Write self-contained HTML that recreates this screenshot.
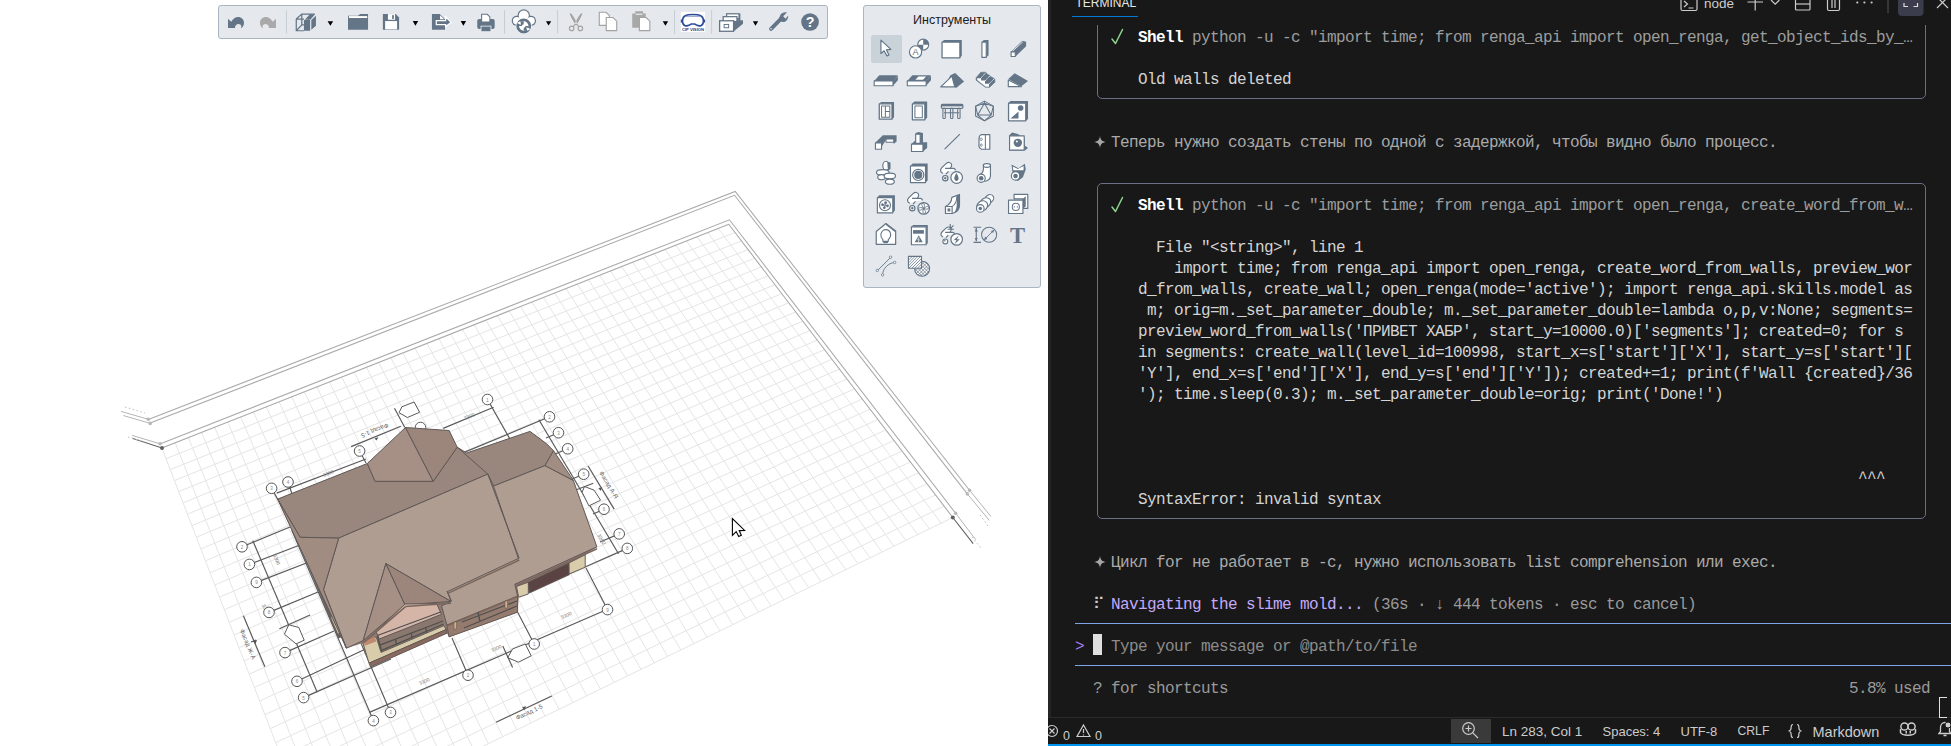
<!DOCTYPE html>
<html><head><meta charset="utf-8">
<style>
html,body{margin:0;padding:0;width:1951px;height:746px;overflow:hidden;background:#fff;position:relative;}
*{box-sizing:border-box;}
.abs{position:absolute;}
#vp{position:absolute;left:0;top:0;width:1048px;height:746px;background:#fff;overflow:hidden;}
#term{position:absolute;left:1048px;top:0;width:903px;height:746px;background:#181818;overflow:hidden;}
.t{position:absolute;font-family:"Liberation Mono",monospace;font-size:16px;letter-spacing:-0.6px;line-height:21px;height:21px;white-space:pre;color:#cccccc;}
.sans{font-family:"Liberation Sans",sans-serif;}
.box{position:absolute;border:1.2px solid #6c6e86;border-radius:5px;}
</style></head>
<body>
<div id="vp">
<!--VIEWPORT-->
<svg width="1048" height="746" viewBox="0 0 1048 746" style="position:absolute;left:0;top:0">
<path d="M728.5 224.1L161.9 448.0M734.9 232.5L166.0 458.7M741.4 241.0L170.2 469.6M748.0 249.5L174.5 480.5M754.6 258.2L178.7 491.6M761.2 266.9L183.1 502.8M768.0 275.8L187.4 514.2M774.8 284.7L191.9 525.6M781.7 293.7L196.4 537.2M788.6 302.8L200.9 548.9M795.7 311.9L205.5 560.8M802.8 321.2L210.1 572.8M809.9 330.6L214.8 585.0M817.2 340.1L219.5 597.2M824.5 349.6L224.3 609.7M831.9 359.3L229.2 622.3M839.3 369.1L234.1 635.0M846.9 379.0L239.1 647.9M854.5 388.9L244.1 660.9M862.2 399.0L249.2 674.1M870.0 409.2L254.4 687.5M877.9 419.5L259.6 701.0M885.9 429.9L264.9 714.7M893.9 440.5L270.3 728.6M902.0 451.1L275.7 742.6M910.3 461.9L281.2 756.8M918.6 472.7L286.7 771.2M927.0 483.7L292.4 785.8M935.5 494.9L298.1 800.6M944.1 506.1L303.8 815.5M952.8 517.5L309.7 830.7M728.5 224.1L952.8 517.5M718.0 228.2L941.2 523.2M707.5 232.4L929.5 528.9M696.9 236.6L917.7 534.6M686.3 240.8L905.9 540.4M675.6 245.0L894.0 546.2M664.9 249.2L882.0 552.0M654.1 253.5L870.0 557.8M643.2 257.8L857.9 563.7M632.4 262.1L845.7 569.7M621.4 266.4L833.4 575.6M610.4 270.8L821.1 581.6M599.4 275.1L808.7 587.7M588.3 279.5L796.3 593.7M577.1 283.9L783.7 599.8M565.9 288.4L771.1 606.0M554.6 292.8L758.5 612.1M543.3 297.3L745.7 618.4M531.9 301.8L732.9 624.6M520.5 306.3L720.0 630.9M509.0 310.9L707.0 637.2M497.4 315.4L694.0 643.6M485.8 320.0L680.8 650.0M474.1 324.6L667.6 656.4M462.4 329.3L654.3 662.9M450.6 333.9L641.0 669.4M438.8 338.6L627.5 675.9M426.8 343.3L614.0 682.5M414.9 348.0L600.4 689.1M402.8 352.8L586.7 695.8M390.7 357.6L572.9 702.5M378.6 362.4L559.0 709.3M366.4 367.2L545.1 716.1M354.1 372.1L531.0 722.9M341.7 376.9L516.9 729.8M329.3 381.8L502.7 736.7M316.9 386.8L488.4 743.7M304.3 391.7L474.0 750.7M291.7 396.7L459.6 757.7M279.0 401.7L445.0 764.8M266.3 406.7L430.3 771.9M253.5 411.8L415.6 779.1M240.6 416.9L400.8 786.4M227.7 422.0L385.8 793.6M214.7 427.2L370.8 800.9M201.6 432.3L355.7 808.3M188.4 437.5L340.4 815.7M175.2 442.7L325.1 823.2M161.9 448.0L309.7 830.7" stroke="#e5e5e5" stroke-width="1" fill="none"/>
<path d="M148.3 419.4 L735.2 191.5 L969.5 490.2" stroke="#aaaaaa" stroke-width="1.05" fill="none" stroke-linejoin="miter"/>
<path d="M150.2 423.1 L734.5 195.3 L967.3 493.9" stroke="#aaaaaa" stroke-width="1.05" fill="none" stroke-linejoin="miter"/>
<path d="M159.9 443.9 L729.4 219.8 L955.6 513.2" stroke="#aaaaaa" stroke-width="1.05" fill="none" stroke-linejoin="miter"/>
<path d="M161.9 448.1 L728.8 224.3 L952.8 517.5" stroke="#aaaaaa" stroke-width="1.05" fill="none" stroke-linejoin="miter"/>
<g id="annot" stroke="#5a5a5a" stroke-width="1.15" fill="none">
 <!-- boundary ends -->
 <g stroke="#b5b5b5" stroke-width="1"><path d="M148.3 419.3 L121 411.4 M150.2 423.4 L123.3 415.5 M160.1 443.8 L132.1 435.4 M969.5 490.2 L990.9 516.4 M967.3 493.9 L989.3 520.4 M955.6 513.2 L975.7 539.7"/></g>
 <path d="M162 448 L132.1 438.3 M952.8 517.5 L973.2 543.7" stroke="#666"/>
 <g stroke="#bbb" stroke-width="1" stroke-dasharray="1.5 2.5"><path d="M125 407 L145 413 M128 437 L148 443 M980 515 L988 526 M972 537 L981 548"/></g>
 <!-- left chain -->
 <path d="M252.8 540.7 L317.2 692.2"/>
 <path d="M242 546.8 L290 527 M249.4 564.4 L300 545 M256.4 582.4 L309 562 M269 612.4 L318 592 M285 652.6 L334 631 M297 681.3 L372 646 M303.6 697.6 L391 659"/>
 <path d="M243.4 615.8 L264.9 666.8 M251 642 L256 640"/>
 <!-- bottom chain -->
 <path d="M373.4 720.6 L291.7 530 M390.5 712.4 L352 622 M468 675.2 L452 638 M534.2 644 L517 611 M607.5 609.6 L586 568"/>
 <path d="M369.4 712.4 L607 609.5"/>
 <path d="M496 722.3 L551.8 695.9"/>
 <!-- right chain -->
 <path d="M538.9 419.8 L618.5 553.7"/>
 <path d="M549.5 416.8 L464.1 452.4 M558.5 432.7 L546 438 M567.7 448.8 L553 455 M583.7 474.2 L572 479 M604 509.2 L593 514 M619.2 533.9 L600 542 M627.3 548.4 L585 567"/>
 <path d="M443.2 428.4 L493.6 407.3 M487.5 399.5 L510 439.1"/>
 <path d="M588.1 466 L614.2 509.1"/>
 <!-- top chain -->
 <path d="M276.7 493.1 L366 459 M271.6 488.3 L277.6 499.1 M288 482 L292 494 M359.6 451 L366 463"/>
 <path d="M351.1 446.6 L400.8 426.3 M394.5 408.3 L404.8 427.4"/>
 <!-- tags -->
 <g fill="#fff" stroke-width="1">
  <path d="M399 412.7 L401.9 406.8 L414.1 402 L419.6 412.3 L407.4 417.5 Z"/>
  <path d="M584.5 486.5 L594.1 490.2 L600.6 500.2 L588.9 505.9 L582.1 492.2 Z"/>
  <path d="M288.8 624.8 L298.8 627.5 L304.2 640.2 L296.1 643.9 L284.4 634.2 Z"/>
  <path d="M507.7 657.7 L512.6 648.9 L525.3 644 L531.2 655.8 L518.5 662.2 Z"/>
 </g>
 <path d="M576.4 489.8 L593.3 483.3 M279.4 628.8 L310 615.1 M502.8 646 L512.6 667.5"/>
 <g fill="#555" stroke="none"><path d="M374.5 438.5 L378.5 437 L376.5 440.5 Z M598.5 488 L602 487.5 L600.5 491 Z M522 707.5 L526 706 L524.5 710 Z M253 641 L257 640 L255.5 644 Z"/></g>
</g>
<!-- house base/walls -->
<g stroke="#5e5654" stroke-width="0.9" stroke-linejoin="round">
 <path d="M277.6 499.1 L596.9 546.8 L585.2 554.7 L585.2 567.2 L518.7 597.2 L517.6 612.2 L449 636.9 L447 633.2 L370.7 666.5 L362.2 643.3 L346.4 648.2 Z" fill="#8e7b72" stroke="none"/>
 <path d="M376.2 633.1 L440.1 609 L443.7 624.6 L381 652.4 Z" fill="#8a776e" stroke="none"/>
 <path d="M300 546 L305.5 545 L343 636 L338.5 638 Z" fill="#6a6361"/><path d="M331 617.6 L334 616.5 L341 632 L338 633.5 Z" fill="#d9ccaa" stroke="none"/>
 <path d="M362.9 642.7 L376.2 637 L381 652.4 L443.7 625.8 L446.2 629.5 L369 663.2 Z" fill="#d9ccaa"/><path d="M363.5 641.5 L375 636.7 L376.2 641.5 L364.7 645.7 Z" fill="#c08a70" stroke="none"/>
 <path d="M369 663.2 L446.2 629.5 L447 633.2 L370.7 666.9 Z" fill="#8a6a5e"/>
 <path d="M446.9 625.1 L517.6 596.1 L517.6 612.2 L449 636.9 Z" fill="#957a6e"/>
 <path d="M516.5 586.5 L528.3 582.2 L528.3 594 L518.7 597.2 Z" fill="#d9ccaa"/>
 <path d="M528.3 582.2 L569.1 562.9 L569.1 574.7 L529.4 592.9 Z" fill="#5b4343"/>
 <path d="M569.1 562.9 L585.2 554.7 L585.2 567.2 L569.1 574 Z" fill="#d9ccaa"/>
</g>
<circle cx="420.5" cy="427.5" r="5.3" fill="#fff" stroke="#555" stroke-width="1"/>
<!-- roof -->
<g stroke="#5f5856" stroke-width="1" stroke-linejoin="round">
 <!-- back slope dark -->
 <path d="M277.6 499.1 L367.3 463.5 L375.1 481.3 L433.2 481.3 L457.2 447.2 L466.7 453 L530 431.4 L546.4 443.6 L553.5 450.7 L545 465.6 L493.5 486.1 L487.8 474.1 L338.7 538.1 L300.1 537.3 Z" fill="#99877d"/>
 <!-- front light -->
 <path d="M338.7 538.1 L487.8 474.1 L493.5 486.1 L545 465.6 L573.3 480.4 L596.9 546.8 L514.8 584.3 L517.6 596.1 L446.9 625.1 L441.5 605.8 L451.1 601.5 L385.9 563.6 L363.2 640.6 L346.4 648.2 L323.5 589.6 Z" fill="#b09d92"/>
 <path d="M277.6 499.1 L300.1 537.3 L338.7 538.1 L323.5 589.6 L346.4 648.2 Z" fill="#a18c82"/>
 <path d="M545 465.6 L553.5 450.7 L573.3 480.4 Z" fill="#a28d83"/>
 <!-- dormer -->
 <path d="M367.3 463.5 L405.5 427.5 L433.2 481.3 L375.1 481.3 Z" fill="#a69086"/>
 <path d="M405.5 427.5 L449.1 430.5 L457.2 447.2 L433.2 481.3 Z" fill="#9c867b"/>
 <!-- internal edges -->
 <path d="M487.8 474.1 L519.1 558.1 L447.4 591.6 L451.4 601 M493.5 486.1 L518.6 559 M457.2 447.2 L487.8 474.1" fill="none"/>
 <!-- front gable -->
 <path d="M385.9 563.6 L405 604.8 L363.2 640.6 Z" fill="#a69086"/>
 <path d="M385.9 563.6 L450.9 601.4 L405 604.8 Z" fill="#9c867b"/>
 <path d="M376.1 631.5 L405 604 L436.6 603.6 L441.5 614.3 L379.3 639 Z" fill="#d5b5a8"/>
 <path d="M451.1 601.5 L446.9 590.8" fill="none"/>
</g>
<g stroke="#7a665c" stroke-width="1.6" fill="none" stroke-linecap="butt">
 <path d="M519.3 560 L447.8 593.4 M597 548.8 L515.2 586.2 M517.6 596.5 L447.5 625.5 M405.5 606.5 L451 603.2 M364 642.3 L405.5 606.6"/>
</g>
<g stroke="#4f4f4f" stroke-width="1.3" fill="none">
 <path d="M377.4 635.5 L440.7 612 M379.8 645.1 L443.1 621 M381 650.6 L443.7 624 M377.5 636 L381.5 651 M395.5 639 L396.5 645 M411.2 632.5 L412.2 638.5 M425.6 627 L426.6 633"/>
 <path d="M462 622 L517 601 M464 628 L517 606 M478 612 L480 622"/>
</g>
<g fill="#d2b08f" stroke="#6d5a50" stroke-width="0.6"><rect x="454" y="622" width="2.6" height="7"/><rect x="505" y="601" width="2.6" height="7"/></g>
<g font-family="Liberation Sans" fill="#666" font-size="6.2">
 <text transform="translate(374 428.5) rotate(158)" text-anchor="middle">Фасад 1-5</text>
 <text transform="translate(607 486) rotate(59)" text-anchor="middle">Фасад А-Я</text>
 <text transform="translate(246 645) rotate(67)" text-anchor="middle">Фасад Ж-А</text>
 <text transform="translate(530 714) rotate(-25)" text-anchor="middle">Фасад 1-5</text>
</g>
<g font-family="Liberation Sans" fill="#777" font-size="5">
 <text transform="translate(329 475) rotate(-22)" text-anchor="middle">3300</text>
 <text transform="translate(470 418) rotate(-22)" text-anchor="middle">3300</text>
 <text transform="translate(567 617) rotate(-25)" text-anchor="middle">3300</text>
 <text transform="translate(425 683) rotate(-25)" text-anchor="middle">3300</text>
 <text transform="translate(497 650) rotate(-25)" text-anchor="middle">3300</text>
 <text transform="translate(264 610) rotate(67)" text-anchor="middle">3300</text>
 <text transform="translate(275 560) rotate(67)" text-anchor="middle">3300</text>
 <text transform="translate(600 540) rotate(59)" text-anchor="middle">3300</text>
</g>
<!-- circles -->
<g stroke="#555" stroke-width="1" fill="#fff">
 <circle cx="487.5" cy="399.5" r="5.3"/><circle cx="549.5" cy="416.8" r="5.3"/><circle cx="558.5" cy="432.7" r="5.3"/>
 <circle cx="567.7" cy="448.8" r="5.3"/><circle cx="583.7" cy="474.2" r="5.3"/><circle cx="604" cy="509.2" r="5.3"/>
 <circle cx="619.2" cy="533.9" r="5.3"/><circle cx="627.3" cy="548.4" r="5.3"/><circle cx="607.5" cy="609.6" r="5.3"/>
 <circle cx="534.2" cy="644" r="5.3"/><circle cx="468" cy="675.2" r="5.3"/><circle cx="390.5" cy="712.4" r="5.3"/>
 <circle cx="373.4" cy="720.6" r="5.3"/><circle cx="303.6" cy="697.6" r="5.3"/><circle cx="297" cy="681.3" r="5.3"/>
 <circle cx="285" cy="652.6" r="5.3"/><circle cx="269" cy="612.4" r="5.3"/><circle cx="256.4" cy="582.4" r="5.3"/>
 <circle cx="249.4" cy="564.4" r="5.3"/><circle cx="242" cy="546.8" r="5.3"/><circle cx="271.6" cy="488.3" r="5.3"/>
 <circle cx="288" cy="482" r="5.3"/><circle cx="359.6" cy="451" r="5.3"/>
</g>
<g font-family="Liberation Sans" fill="#888" font-size="4.5" text-anchor="middle"><text x="487.5" y="401.5">1</text><text x="549.5" y="418.8">2</text><text x="558.5" y="434.7">3</text><text x="567.7" y="450.8">4</text><text x="583.7" y="476.2">5</text><text x="604.0" y="511.2">6</text><text x="619.2" y="535.9">7</text><text x="627.3" y="550.4">8</text><text x="607.5" y="611.6">9</text><text x="534.2" y="646.0">1</text><text x="468.0" y="677.2">2</text><text x="390.5" y="714.4">3</text><text x="373.4" y="722.6">4</text><text x="303.6" y="699.6">5</text><text x="297.0" y="683.3">6</text><text x="285.0" y="654.6">7</text><text x="269.0" y="614.4">8</text><text x="256.4" y="584.4">9</text><text x="249.4" y="566.4">1</text><text x="242.0" y="548.8">2</text><text x="271.6" y="490.3">3</text><text x="288.0" y="484.0">4</text><text x="359.6" y="453.0">5</text></g>


<path d="M732.4 518.5 L732.4 535.4 L736.2 531.6 L738.7 536.5 L741.3 535.2 L739.2 530.6 L744.6 530.4 Z" fill="#fff" stroke="#000" stroke-width="1.1" stroke-linejoin="miter"/>
<g><circle cx="148.3" cy="419.3" r="1.8" fill="#b8b8b8"/><circle cx="150.2" cy="423.4" r="1.8" fill="#b8b8b8"/><circle cx="160.1" cy="443.8" r="1.8" fill="#b8b8b8"/><circle cx="162" cy="448" r="2" fill="#606060"/><circle cx="969.5" cy="490.2" r="1.8" fill="#b8b8b8"/><circle cx="967.3" cy="493.9" r="1.8" fill="#b8b8b8"/><circle cx="955.6" cy="513.2" r="1.8" fill="#b8b8b8"/><circle cx="952.8" cy="517.5" r="2" fill="#606060"/></g>

</svg>
<!--/VIEWPORT-->
<!--TOOLBAR-->
<div class="abs" style="left:218px;top:5px;width:610px;height:34px;background:#e5e9ed;border:1px solid #a9b5c1;border-radius:3px;"></div>
<svg class="abs" style="left:0;top:0" width="860" height="45" viewBox="0 0 860 45">
 <g transform="translate(220 8) scale(0.0615)">
  <path id="undo" d="M130 175 L182 224 C212 180 250 148 295 148 C350 148 390 190 390 240 C390 280 375 305 350 325 L342 325 C350 305 350 285 335 272 C315 255 280 255 262 278 L245 300 L245 325 L130 325 Z" fill="#637587"/>
  <path d="M130 175 L182 224 C212 180 250 148 295 148 C350 148 390 190 390 240 C390 280 375 305 350 325 L342 325 C350 305 350 285 335 272 C315 255 280 255 262 278 L245 300 L245 325 L130 325 Z" fill="#a9a9a9" transform="translate(1040 0) scale(-1 1)"/>
  <path d="M1080 35 L1080 415" stroke="#c5ccd4" stroke-width="16"/>
  <g fill="none" stroke="#637587" stroke-width="20">
   <path d="M1240 180 L1240 370 L1365 370 M1240 180 L1330 100 L1540 100 M1240 180 L1365 180 M1330 100 L1330 275 L1365 275 M1240 370 L1330 275"/>
  </g>
  <path d="M1365 195 L1465 195 L1465 370 L1365 370 Z M1380 190 L1460 100 L1545 100 L1468 190 Z M1485 195 L1560 125 L1560 290 L1485 355 Z" fill="#637587"/>
  <path d="M1750 215 L1840 215 L1795 290 Z" fill="#000"/>
 </g>
 <g transform="translate(340 8) scale(0.08714)">
  <path d="M92 90 L205 90 L232 70 L322 70 L322 250 L92 250 Z" fill="#637587"/>
  <rect x="102" y="93" width="210" height="22" fill="#fff"/>
  <path d="M492 70 L640 70 L678 108 L678 250 L492 250 Z" fill="#637587"/>
  <rect x="518" y="150" width="137" height="95" fill="#fff"/>
  <rect x="550" y="70" width="82" height="65" fill="#fff"/>
  <rect x="598" y="82" width="20" height="43" fill="#637587"/>
  <path d="M835 150 L897 150 L866 205 Z" fill="#000"/>
  <path d="M1055 70 L1145 70 L1205 130 L1205 250 L1055 250 Z" fill="#637587"/>
  <path d="M1148 82 L1195 130 L1148 130 Z" fill="#fff"/>
  <path d="M1105 145 L1212 145 L1212 100 L1275 165 L1212 212 L1212 190 L1105 190 Z" fill="#637587" stroke="#fff" stroke-width="14"/>
  <path d="M1385 150 L1447 150 L1416 205 Z" fill="#000"/>
  <rect x="1575" y="125" width="200" height="115" rx="22" fill="#637587"/>
  <path d="M1625 72 L1690 72 L1720 102 L1720 160 L1625 160 Z" fill="#fff" stroke="#637587" stroke-width="12"/>
  <rect x="1618" y="208" width="114" height="64" fill="#637587" stroke="#e5e9ed" stroke-width="10"/>
  <path d="M1888 25 L1888 295" stroke="#c5ccd4" stroke-width="11"/>
 </g>
 <g transform="translate(505 6) scale(0.08714)">
  <g fill="#637587"><circle cx="215" cy="110" r="72"/><circle cx="135" cy="170" r="58"/><circle cx="298" cy="170" r="58"/></g>
  <g fill="#fff"><circle cx="215" cy="110" r="58"/><circle cx="135" cy="170" r="44"/><circle cx="298" cy="170" r="44"/><rect x="135" y="150" width="165" height="80"/></g>
  <circle cx="215" cy="228" r="92" fill="#fff"/>
  <circle cx="215" cy="230" r="70" fill="none" stroke="#637587" stroke-width="32"/>
  <path d="M215 175 A55 55 0 0 0 160 230 L195 230 A20 20 0 0 1 215 210 Z M215 285 A55 55 0 0 0 270 230 L235 230 A20 20 0 0 1 215 250 Z" fill="#637587"/>
  <path d="M135 195 L175 175 L185 215 Z M295 265 L255 285 L245 245 Z" fill="#fff"/>
  <path d="M470 175 L530 175 L500 225 Z" fill="#000"/>
  <path d="M603 45 L603 315" stroke="#c5ccd4" stroke-width="11"/>
  <g fill="#a3a3a3"><path d="M742 80 C760 85 775 100 790 130 L835 210 L812 225 L770 150 C755 120 745 100 742 80 Z M888 80 C870 85 855 100 840 130 L795 210 L818 225 L860 150 C875 120 885 100 888 80 Z"/></g>
  <g fill="none" stroke="#a3a3a3" stroke-width="13"><circle cx="765" cy="257" r="26"/><circle cx="865" cy="257" r="26"/><path d="M815 205 L780 236 M815 205 L850 236"/></g>
  <g fill="#fff" stroke="#a3a3a3" stroke-width="13">
   <path d="M1082 72 L1160 72 L1198 110 L1198 223 L1082 223 Z"/>
   <path d="M1162 132 L1240 132 L1282 174 L1282 283 L1162 283 Z"/>
  </g>
  <path d="M1460 85 L1495 85 L1495 60 L1585 60 L1585 85 L1615 85 L1615 250 L1460 250 Z" fill="#a8a8a8"/>
  <rect x="1500" y="88" width="78" height="14" fill="#e5e9ed"/>
  <path d="M1542 132 L1620 132 L1662 174 L1662 283 L1542 283 Z" fill="#fff" stroke="#a3a3a3" stroke-width="13"/>
  <path d="M1810 175 L1872 175 L1841 228 Z" fill="#000"/>
 </g>
 <g transform="translate(670 6) scale(0.08203)">
  <path d="M55 50 L55 340" stroke="#c5ccd4" stroke-width="12"/>
  <rect x="133" y="72" width="295" height="243" fill="#fff"/>
  <path d="M152 182 C152 118 198 104 280 104 C362 104 408 118 408 182 C408 242 362 250 330 236 L302 220 L258 220 L230 236 C198 250 152 242 152 182 Z" fill="none" stroke="#2d4b98" stroke-width="20"/>
  <path d="M195 125 L365 125" stroke="#7f93c4" stroke-width="12"/>
  <path d="M140 165 L140 200 M420 165 L420 200" stroke="#2d4b98" stroke-width="16"/>
  <text x="145" y="304" font-family="Liberation Sans" font-weight="bold" font-size="42" fill="#22397a" textLength="270" lengthAdjust="spacingAndGlyphs">CIP VISION</text>
  <path d="M507 50 L507 340" stroke="#c5ccd4" stroke-width="12"/>
  <g fill="#637587">
   <path d="M835 95 L858 90 L858 190 L835 210 Z"/>
   <path d="M810 130 L835 125 L835 225 L810 245 Z"/>
   <path d="M775 180 L890 175 L890 215 L775 310 Z"/>
  </g>
  <rect x="690" y="95" width="152" height="60" fill="#fff" stroke="#637587" stroke-width="15"/>
  <rect x="648" y="130" width="168" height="60" fill="#fff" stroke="#637587" stroke-width="15"/>
  <rect x="605" y="180" width="170" height="128" fill="#fff" stroke="#637587" stroke-width="16"/>
  <rect x="660" y="225" width="55" height="40" fill="none" stroke="#637587" stroke-width="12"/>
  <path d="M1010 185 L1075 185 L1042 240 Z" fill="#000"/>
  <path d="M1232 278 L1355 155" stroke="#637587" stroke-width="48" stroke-linecap="round"/>
  <circle cx="1232" cy="278" r="10" fill="#e5e9ed"/>
  <path d="M1345 110 C1360 80 1400 70 1425 78 L1380 125 L1410 155 L1440 115 C1445 150 1425 185 1390 195 C1360 200 1330 180 1330 150 Z" fill="#637587"/>
  <circle cx="1707" cy="195" r="108" fill="#637587"/>
  <text x="1707" y="262" font-family="Liberation Sans" font-weight="bold" font-size="175" fill="#fff" text-anchor="middle">?</text>
 </g>
</svg>

<!--/TOOLBAR-->
<!--PANEL-->
<div class="abs" style="left:863px;top:5px;width:178px;height:283px;background:#e5e9ed;border:1px solid #a9b5c1;border-radius:3px;"></div>
<div class="abs sans" style="left:863px;top:13px;width:178px;text-align:center;font-size:12.5px;color:#1b1b1b;">Инструменты</div>
<div class="abs" style="left:871px;top:34.5px;width:30.5px;height:28.5px;background:#c9d1d9;border-radius:2px;"></div>
<svg class="abs" style="left:0;top:0" width="1048" height="295" viewBox="0 0 1048 295">
 <g transform="translate(865 30) scale(0.12737)" stroke-linejoin="round">
  <!-- row1 -->
  <path d="M125 80 L125 185 L150 163 L172 203 L188 196 L168 156 L203 152 Z" fill="#fff" stroke="#637587" stroke-width="9"/>
  <circle cx="457" cy="115" r="43" fill="#fff" stroke="#637587" stroke-width="9"/>
  <path d="M457 115 L457 72 A43 43 0 0 1 500 115 Z M457 115 L457 158 A43 43 0 0 1 414 115 Z" fill="#637587"/>
  <circle cx="397" cy="172" r="48" fill="#fff" stroke="#637587" stroke-width="9"/>
  <text x="397" y="197" font-family="Liberation Sans" font-size="72" fill="#637587" text-anchor="middle">A</text>
  <path d="M605 95 L620 78 L760 78 L745 95 Z M745 95 L760 78 L760 203 L745 218 Z" fill="#637587"/>
  <rect x="605" y="95" width="140" height="123" fill="#fff" stroke="#637587" stroke-width="10"/>
  <path d="M918 95 L932 78 L970 78 L952 95 Z M952 95 L970 78 L970 198 L952 215 Z" fill="#637587"/>
  <rect x="918" y="95" width="34" height="120" fill="#fff" stroke="#637587" stroke-width="9"/>
  <path d="M1145 172 L1235 85 L1265 92 L1180 172 Z M1180 172 L1265 92 L1265 128 L1180 210 Z" fill="#637587"/>
  <path d="M1160 165 L1240 92" stroke="#fff" stroke-width="6"/>
  <rect x="1147" y="172" width="33" height="36" fill="#fff" stroke="#637587" stroke-width="9"/>
  <!-- row2 -->
  <path d="M72 400 L112 355 L258 355 L220 400 Z M220 400 L258 360 L258 395 L220 438 Z" fill="#637587"/>
  <rect x="72" y="400" width="148" height="38" fill="#fff" stroke="#637587" stroke-width="9"/>
  <path d="M332 400 L372 355 L518 355 L480 400 Z M480 400 L518 360 L518 395 L480 438 Z" fill="#637587"/>
  <path d="M395 390 L420 365 L480 365 L455 390 Z" fill="#fff"/>
  <rect x="332" y="400" width="148" height="38" fill="#fff" stroke="#637587" stroke-width="9"/>
  <path d="M670 355 L708 338 L778 405 L715 455 L650 398 Z" fill="#637587"/>
  <path d="M595 447 L682 362 L705 447 Z" fill="#fff" stroke="#637587" stroke-width="9"/>
  <path d="M1125 385 L1175 340 L1280 400 L1228 442 Z" fill="#637587"/>
  <path d="M1125 392 L1125 445 L1228 445 Z" fill="#fff" stroke="#637587" stroke-width="9"/>
  <!-- row3 -->
  <path d="M110 580 L127 565 L228 565 L212 580 Z M212 580 L228 565 L228 685 L212 700 Z" fill="#637587"/>
  <rect x="112" y="580" width="100" height="120" fill="#fff" stroke="#637587" stroke-width="10"/>
  <path d="M130 597 L195 597 L195 685 L130 685 Z M160 597 L160 685 M160 640 L195 640" fill="none" stroke="#637587" stroke-width="8"/>
  <path d="M370 580 L387 562 L488 562 L470 580 Z M470 580 L488 562 L488 688 L470 705 Z" fill="#637587"/>
  <rect x="372" y="580" width="98" height="125" fill="#fff" stroke="#637587" stroke-width="10"/>
  <rect x="392" y="597" width="58" height="92" fill="none" stroke="#637587" stroke-width="8"/>
  <rect x="600" y="585" width="168" height="30" rx="8" fill="#fff" stroke="#637587" stroke-width="10"/>
  <path d="M600 585 L768 585 L768 600 L600 600 Z" fill="#637587"/>
  <g stroke="#637587" stroke-width="9" fill="#fff"><rect x="612" y="615" width="18" height="80" rx="6"/><rect x="672" y="615" width="18" height="80" rx="6"/><rect x="728" y="615" width="18" height="80" rx="6"/></g>
  <path d="M620 650 L740 650" stroke="#637587" stroke-width="8"/>
  <g fill="none" stroke="#637587" stroke-width="8">
   <path d="M938 558 L1008 598 L1008 675 L938 713 L868 675 L868 598 Z"/>
   <path d="M938 575 L990 668 L885 668 Z M938 558 L938 575 M868 598 L885 668 M1008 598 L990 668 M938 713 L885 668 M938 713 L990 668 M868 598 L938 575 L1008 598"/>
  </g>
  <path d="M1125 575 L1142 558 L1280 558 L1262 575 Z M1262 575 L1280 558 L1280 698 L1262 715 Z" fill="#637587"/>
  <rect x="1127" y="575" width="135" height="138" fill="#fff" stroke="#637587" stroke-width="10"/>
  <circle cx="1222" cy="612" r="22" fill="#637587"/>
  <path d="M1142 695 L1205 640 L1205 695 Z" fill="#637587"/>
 </g>
 <g transform="translate(865 125) scale(0.12737)" stroke-linejoin="round">
  <!-- row4 -->
  <path d="M80 140 L140 80 L248 80 L248 130 L225 150 L225 110 L170 110 L130 170 L130 190 Z" fill="#637587"/>
  <rect x="82" y="140" width="48" height="50" fill="#fff" stroke="#637587" stroke-width="9"/>
  <rect x="165" y="110" width="60" height="25" fill="#fff" stroke="#637587" stroke-width="8"/>
  <path d="M365 150 L398 118 L398 62 L420 55 L455 62 L455 135 L488 135 L488 180 L455 208 Z" fill="#637587"/>
  <rect x="398" y="72" width="35" height="72" fill="#fff" stroke="#637587" stroke-width="9"/>
  <rect x="365" y="150" width="90" height="58" fill="#fff" stroke="#637587" stroke-width="9"/>
  <path d="M625 190 L745 72" stroke="#637587" stroke-width="9"/>
  <path d="M915 75 L980 75 L980 190 L915 190 C895 180 892 165 895 150 L895 110 C895 92 900 80 915 75 Z" fill="#fff" stroke="#637587" stroke-width="9"/>
  <path d="M945 75 L945 190" stroke="#637587" stroke-width="8"/>
  <circle cx="912" cy="112" r="9" fill="#fff" stroke="#637587" stroke-width="6"/><circle cx="912" cy="158" r="9" fill="#fff" stroke="#637587" stroke-width="6"/>
  <path d="M1132 80 L1155 58 L1200 70 L1255 105 L1255 160 L1280 180 L1255 200 L1132 200 Z" fill="#637587"/>
  <rect x="1135" y="85" width="115" height="112" fill="#fff" stroke="#637587" stroke-width="9"/>
  <circle cx="1200" cy="140" r="33" fill="#637587"/><circle cx="1192" cy="130" r="8" fill="#fff"/>
  <!-- row5 -->
  <g fill="#fff" stroke="#637587" stroke-width="9">
   <ellipse cx="165" cy="320" rx="25" ry="35"/>
   <ellipse cx="140" cy="372" rx="50" ry="22"/><ellipse cx="130" cy="410" rx="30" ry="20"/>
   <ellipse cx="195" cy="400" rx="45" ry="22"/><ellipse cx="195" cy="445" rx="35" ry="20"/>
  </g>
  <path d="M175 288 L200 295 L200 345 L180 360 Z" fill="#637587"/>
  <path d="M355 322 L375 302 L492 302 L475 322 Z M475 322 L492 302 L492 435 L475 452 Z" fill="#637587"/>
  <rect x="357" y="322" width="118" height="130" fill="#fff" stroke="#637587" stroke-width="9"/>
  <circle cx="418" cy="392" r="44" fill="#fff" stroke="#637587" stroke-width="9"/><circle cx="418" cy="392" r="32" fill="#637587"/>
  <path d="M930 310 L985 310 L985 400 C985 430 950 445 930 440 L900 440 L900 395 C915 385 930 370 930 340 Z" fill="#fff" stroke="#637587" stroke-width="9"/>
  <ellipse cx="957" cy="318" rx="28" ry="15" fill="#fff" stroke="#637587" stroke-width="9"/>
  <circle cx="912" cy="418" r="32" fill="#fff" stroke="#637587" stroke-width="9"/><circle cx="912" cy="418" r="18" fill="#637587"/>
  <path d="M1150 310 L1205 340 L1255 305 L1262 350 L1240 410 L1200 440 L1165 420 Z" fill="#637587"/>
  <path d="M1160 325 L1200 345 L1245 322 L1245 355 L1165 355 Z" fill="#fff"/>
  <circle cx="1182" cy="400" r="33" fill="#fff" stroke="#637587" stroke-width="9"/><circle cx="1182" cy="400" r="18" fill="#637587"/>
  <!-- row6 -->
  <path d="M95 570 L112 552 L235 552 L218 570 Z M218 570 L235 552 L235 672 L218 690 Z" fill="#637587"/>
  <rect x="97" y="570" width="121" height="120" fill="#fff" stroke="#637587" stroke-width="9"/>
  <circle cx="157" cy="630" r="43" fill="#fff" stroke="#637587" stroke-width="9"/>
  <path d="M157 630 C140 600 165 590 175 610 Z M157 630 C187 613 197 638 177 648 Z M157 630 C174 660 149 670 139 650 Z M157 630 C127 647 117 622 137 612 Z" fill="#637587"/>
  <path d="M632 640 C665 625 680 600 682 568 L742 545 L742 632 C742 662 720 685 684 695 L632 695 Z" fill="#fff" stroke="#637587" stroke-width="9"/>
  <path d="M700 560 L742 545 L742 632 C742 655 725 678 700 690 C715 670 720 650 720 625 L720 555 Z" fill="#637587"/>
  <path d="M684 640 C710 625 720 600 722 560" fill="none" stroke="#637587" stroke-width="8"/>
  <rect x="632" y="640" width="52" height="55" fill="#fff" stroke="#637587" stroke-width="9"/>
  <rect x="648" y="655" width="22" height="24" fill="#637587"/>
  <ellipse cx="975" cy="580" rx="38" ry="30" transform="rotate(-35 975 580)" fill="#fff" stroke="#637587" stroke-width="9"/>
  <ellipse cx="945" cy="610" rx="45" ry="36" transform="rotate(-35 945 610)" fill="#fff" stroke="#637587" stroke-width="9"/>
  <ellipse cx="920" cy="635" rx="45" ry="38" transform="rotate(-35 920 635)" fill="#fff" stroke="#637587" stroke-width="9"/>
  <circle cx="905" cy="655" r="30" fill="#fff" stroke="#637587" stroke-width="9"/><circle cx="905" cy="655" r="14" fill="#637587"/>
  <path d="M1170 545 L1278 545 L1278 655 L1240 655 L1240 580 L1170 580 Z" fill="#fff" stroke="#637587" stroke-width="9"/>
  <path d="M1240 580 L1262 560 L1262 640 L1240 655 Z" fill="#637587"/>
  <rect x="1127" y="590" width="113" height="105" fill="#fff" stroke="#637587" stroke-width="9"/>
  <circle cx="1184" cy="643" r="28" fill="#fff" stroke="#637587" stroke-width="8"/>
  <circle cx="1172" cy="643" r="5" fill="#637587"/><circle cx="1196" cy="643" r="5" fill="#637587"/>
 </g>
 <g transform="translate(865 215) scale(0.10051)" stroke-linejoin="round">
  <path d="M112 165 L208 85 L305 160 L305 292 L112 292 Z" fill="#fff" stroke="#637587" stroke-width="12"/>
  <path d="M208 85 L305 160 L305 175 L208 100 Z" fill="#637587"/>
  <path d="M178 245 C160 225 155 205 158 190 C165 160 190 145 205 145 C225 145 250 160 255 190 C258 205 250 225 232 245 L232 262 L178 262 Z" fill="#fff" stroke="#637587" stroke-width="11"/>
  <rect x="182" y="262" width="46" height="18" fill="#637587"/>
  <path d="M462 118 L478 100 L625 100 L608 118 Z M608 118 L625 100 L625 280 L608 297 Z" fill="#637587"/>
  <rect x="462" y="118" width="146" height="178" fill="#fff" stroke="#637587" stroke-width="12"/>
  <rect x="478" y="150" width="108" height="36" fill="#637587"/>
  <path d="M495 272 L535 202 L575 272 Z" fill="#637587"/>
  <path d="M538 222 L525 248 L540 246 L530 268" stroke="#fff" stroke-width="7" fill="none"/>
  <path d="M1080 122 L1155 122 M1080 272 L1155 272 M1107 130 L1107 262" stroke="#637587" stroke-width="11"/>
  <path d="M1092 165 L1107 130 L1122 165 Z M1092 228 L1107 262 L1122 228 Z" fill="#637587"/>
  <circle cx="1235" cy="197" r="75" fill="none" stroke="#637587" stroke-width="10"/>
  <path d="M1185 248 L1285 148" stroke="#637587" stroke-width="9"/>
  <path d="M1185 248 L1195 215 L1218 238 Z M1285 148 L1252 158 L1275 180 Z" fill="#637587"/>
  <text x="1517" y="278" font-family="Liberation Serif" font-weight="bold" font-size="225" fill="#637587" text-anchor="middle">T</text>
  <path d="M125 552 L255 422" stroke="#637587" stroke-width="9"/>
  <path d="M175 592 C180 530 230 480 293 472" fill="none" stroke="#637587" stroke-width="9"/>
  <g fill="#fff" stroke="#637587" stroke-width="8"><circle cx="122" cy="552" r="12"/><circle cx="255" cy="420" r="12"/><circle cx="175" cy="595" r="12"/><circle cx="295" cy="472" r="12"/></g>
  <defs>
   <pattern id="hat" width="20" height="20" patternUnits="userSpaceOnUse" patternTransform="rotate(45)"><rect width="20" height="20" fill="#fff"/><path d="M2 0 L2 20" stroke="#637587" stroke-width="7"/></pattern>
   <pattern id="xh" width="24" height="24" patternUnits="userSpaceOnUse" patternTransform="rotate(45)"><rect width="24" height="24" fill="#fff"/><path d="M2 0 L2 24 M0 2 L24 2" stroke="#637587" stroke-width="7"/></pattern>
  </defs>
  <circle cx="568" cy="535" r="75" fill="url(#xh)" stroke="#637587" stroke-width="10"/>
  <rect x="432" y="412" width="130" height="118" fill="url(#hat)" stroke="#637587" stroke-width="11"/>
 </g>
 <g>
  <path d="M976.1 77.7 L980.9 72.2 L985.8 72.2 L987.1 74.1 L989.3 75.2 L990.6 76.5 L993.8 78.3 L994.9 79.6 L994.9 82.2 L989.6 87.3 L985.4 87.3 L976.1 80.2 Z" fill="#637587" stroke="#637587" stroke-width="0.6" stroke-linejoin="round"/>
  <path d="M977.2 78.3 L981.1 78.3 L981.1 80.6 L985 80.6 L985 83.8 L989 83.8 L989 86.7 L985.8 86.7 L977.2 79.9 Z" fill="#fff"/>
  <path d="M981.3 77.7 L985.8 72.5 M985.1 80.9 L990 75.7 M989.2 83.9 L994.1 78.8" stroke="#fff" stroke-width="0.9" stroke-dasharray="1.2 0.6"/>
 </g>
 <g transform="translate(935 158) scale(0.04289)">
<path d="M175 350 C120 330 115 270 160 225 L265 125 C305 90 365 100 385 145 C398 180 380 210 360 235 L235 240 L430 240 C460 245 475 265 480 290 L330 300 C300 330 250 360 175 350 Z" fill="#fff" stroke="none"/>
<path d="M175 350 C120 330 115 270 160 225 L265 125 C305 90 365 100 385 145 C398 180 380 210 360 235" fill="none" stroke="#637587" stroke-width="28" stroke-linecap="round"/>
<path d="M235 240 L430 240 C460 245 475 265 480 290 M315 310 L255 375" fill="none" stroke="#637587" stroke-width="28"/>
<circle cx="240" cy="470" r="62" fill="#fff" stroke="#637587" stroke-width="28"/>
<path d="M240 440 L240 500 M210 470 L270 470" stroke="#637587" stroke-width="26"/>
<circle cx="505" cy="455" r="135" fill="#fff" stroke="#637587" stroke-width="28"/>
<path d="M500 350 C470 400 450 440 450 480 C450 520 475 535 500 535 C525 535 550 520 550 480 C550 440 530 400 500 350 Z" fill="#637587"/>
 </g>
 <g transform="translate(902 188) scale(0.04289)">
<path d="M175 350 C120 330 115 270 160 225 L265 125 C305 90 365 100 385 145 C398 180 380 210 360 235 L235 240 L430 240 C460 245 475 265 480 290 L330 300 C300 330 250 360 175 350 Z" fill="#fff" stroke="none"/>
<path d="M175 350 C120 330 115 270 160 225 L265 125 C305 90 365 100 385 145 C398 180 380 210 360 235" fill="none" stroke="#637587" stroke-width="28" stroke-linecap="round"/>
<path d="M235 240 L430 240 C460 245 475 265 480 290 M315 310 L255 375" fill="none" stroke="#637587" stroke-width="28"/>
<circle cx="240" cy="470" r="62" fill="#fff" stroke="#637587" stroke-width="28"/>
<path d="M240 440 L240 500 M210 470 L270 470" stroke="#637587" stroke-width="26"/>
<circle cx="505" cy="475" r="135" fill="#fff" stroke="#637587" stroke-width="28"/>
<g fill="none" stroke="#637587" stroke-width="22"><path d="M505 475 C470 420 440 380 480 360 C520 345 540 400 505 475 Z M505 475 C560 440 600 410 620 450 C635 490 580 510 505 475 Z M505 475 C540 530 570 570 530 590 C490 605 470 550 505 475 Z M505 475 C450 510 410 540 390 500 C375 460 430 440 505 475 Z"/></g>
 </g>
 <g transform="translate(935 219) scale(0.04289)">
<g transform="translate(20 90) scale(0.92)"><path d="M175 350 C120 330 115 270 160 225 L265 125 C305 90 365 100 385 145 C398 180 380 210 360 235 L235 240 L430 240 C460 245 475 265 480 290 L330 300 C300 330 250 360 175 350 Z" fill="#fff" stroke="none"/>
<path d="M175 350 C120 330 115 270 160 225 L265 125 C305 90 365 100 385 145 C398 180 380 210 360 235" fill="none" stroke="#637587" stroke-width="28" stroke-linecap="round"/>
<path d="M235 240 L430 240 C460 245 475 265 480 290 M315 310 L255 375" fill="none" stroke="#637587" stroke-width="28"/>
<circle cx="240" cy="470" r="62" fill="#fff" stroke="#637587" stroke-width="28"/></g>
<circle cx="230" cy="510" r="18" fill="#637587"/>
<path d="M355 115 L355 240 M290 240 L440 240 M365 220 L430 150" stroke="#637587" stroke-width="26"/>
<circle cx="505" cy="475" r="135" fill="#fff" stroke="#637587" stroke-width="28"/>
<path d="M560 380 L430 495 L500 490 L455 590 L580 470 L510 475 Z" fill="#637587"/>
 </g>
</svg>

<!--/PANEL-->
</div>

<div id="term">
  <!-- left strip -->
  <div class="abs" style="left:0;top:0;width:3px;height:718px;background:#252526;"></div>
  <!-- tab -->
  <div class="abs sans" style="left:27.5px;top:-4px;font-size:12px;color:#e7e7e7;">TERMINAL</div>
  <div class="abs" style="left:24px;top:15.5px;width:66px;height:1.6px;background:#0078d4;"></div>
  <!-- right tab icons -->
  <!--STATUS-->
<div class="abs" style="left:0;top:717px;width:903px;height:1px;background:#2b2b2b;"></div>
<div class="abs" style="left:0;top:743.8px;width:903px;height:3px;background:#0094ee;"></div>
<div class="abs" style="left:403px;top:719px;width:40px;height:24px;background:#3a3a3a;"></div>
<svg class="abs" style="left:0;top:715px" width="903" height="31" viewBox="0 0 903 31">
 <g fill="none" stroke="#cccccc" stroke-width="1.2">
  <circle cx="4" cy="16" r="5.5"/><path d="M1.5 13.5 L6.5 18.5 M6.5 13.5 L1.5 18.5"/>
  <path d="M35.5 10 L42 21.5 L29 21.5 Z"/><path d="M35.5 14 L35.5 18 M35.5 19.5 L35.5 20.5"/>
  <circle cx="420.5" cy="13.5" r="5.8"/><path d="M417.5 13.5 L423.5 13.5 M420.5 10.5 L420.5 16.5 M424.8 17.8 L430 23"/>
  <path d="M745 9.5 C742.5 9.5 743.5 11 743 14 C742.5 15.5 741.5 16 740.5 16 C741.5 16 742.5 16.5 743 18 C743.5 21 742.5 22.5 745 22.5 M749 9.5 C751.5 9.5 750.5 11 751 14 C751.5 15.5 752.5 16 753.5 16 C752.5 16 751.5 16.5 751 18 C750.5 21 751.5 22.5 749 22.5"/>
 </g>
 <g fill="none" stroke="#cccccc" stroke-width="1.5">
  <circle cx="856.5" cy="11.5" r="3.6"/><circle cx="863.5" cy="11.5" r="3.6"/>
  <path d="M852.5 14 L852.5 17.5 C854 21 866 21 867.5 17.5 L867.5 14"/>
 </g>
 <g fill="#cccccc"><rect x="857.5" y="16" width="1.5" height="2.5"/><rect x="861.5" y="16" width="1.5" height="2.5"/></g>
 <path d="M891 18.5 L892.5 16.5 L892.5 12.5 C892.5 9.5 894.5 7.5 897 7.5 C899.5 7.5 901.5 9.5 901.5 12.5 L901.5 16.5 L903 18.5 Z M895.5 20.5 L898.5 20.5" fill="none" stroke="#cccccc" stroke-width="1.3"/>
 <circle cx="900" cy="10" r="3" fill="#cccccc" stroke="#181818" stroke-width="1"/>
</svg>
<div class="abs sans" style="left:15px;top:728.5px;font-size:12.5px;color:#cccccc;">0</div>
<div class="abs sans" style="left:47px;top:728.5px;font-size:12.5px;color:#cccccc;">0</div>
<div class="abs sans" style="left:454px;top:724.3px;font-size:13.5px;color:#cccccc;">Ln 283, Col 1</div>
<div class="abs sans" style="left:554.5px;top:724.3px;font-size:13px;color:#cccccc;">Spaces: 4</div>
<div class="abs sans" style="left:632.5px;top:724.3px;font-size:13px;color:#cccccc;">UTF-8</div>
<div class="abs sans" style="left:689.5px;top:724.3px;font-size:12.2px;color:#cccccc;">CRLF</div>
<div class="abs sans" style="left:764.5px;top:724.3px;font-size:14.5px;color:#cccccc;">Markdown</div>
<!-- right bracket thing -->
<div class="abs" style="left:891.4px;top:697.3px;width:8px;height:20.4px;border:1.3px solid #e0e0e0;border-right:none;"></div>
<!-- tab bar icons -->
<svg class="abs" style="left:620px;top:0" width="283" height="20" viewBox="0 0 283 20">
 <g fill="none" stroke="#cccccc" stroke-width="1.2">
  <rect x="13" y="-4" width="16" height="14.5" rx="1.5"/>
  <path d="M16 1 L19.5 4 L16 7 M20.5 8 L25.5 8"/>
  <path d="M79.5 2 L95 2 M87.2 -4 L87.2 10.5"/>
  <path d="M103 0 L107.2 4.2 L111.4 0"/>
  <rect x="127.5" y="-4" width="14.5" height="14" rx="1"/><path d="M127.5 4 L142 4"/>
  <rect x="159.5" y="-4" width="12" height="14.5" rx="1.5"/><path d="M164 -2 L164 8 M167 -2 L167 8"/>
  <path d="M269 -3 L280 8 M280 -3 L269 8"/>
 </g>
 <g fill="#cccccc"><circle cx="189.3" cy="2.5" r="1.1"/><circle cx="196.4" cy="2.5" r="1.1"/><circle cx="203.6" cy="2.5" r="1.1"/></g>
 <rect x="219.5" y="0" width="1" height="13" fill="#555"/>
 <rect x="230" y="-6" width="25.5" height="22" rx="4" fill="#3b3c4c"/>
 <path d="M236 3 L236 6.5 L240 6.5 M249.5 3 L249.5 6.5 L245.5 6.5" fill="none" stroke="#dddddd" stroke-width="1.2"/>
</svg>
<div class="abs sans" style="left:656px;top:-4px;font-size:13.5px;color:#cccccc;">node</div>

<!--/STATUS-->

  <!-- boxes -->
  <div class="abs" style="left:40px;top:25px;width:850px;height:80px;overflow:hidden;"><div class="box" style="left:9px;top:-35px;width:829px;height:109px;"></div></div>
  <div class="box" style="left:49px;top:182.5px;width:829px;height:336.5px;"></div>

  <!--TEXT-->
<svg class="abs" style="left:60px;top:27px" width="18" height="18" viewBox="0 0 18 18"><path d="M4 12 L7.5 16.5 L14.5 2.5" fill="none" stroke="#8fd48f" stroke-width="1.5" stroke-linecap="round" stroke-linejoin="round"/></svg>
<svg class="abs" style="left:60px;top:195px" width="18" height="18" viewBox="0 0 18 18"><path d="M4 12 L7.5 16.5 L14.5 2.5" fill="none" stroke="#8fd48f" stroke-width="1.5" stroke-linecap="round" stroke-linejoin="round"/></svg>
<svg class="abs" style="left:45px;top:134.5px" width="14" height="14" viewBox="0 0 14 14"><path d="M7 1 C7.6 5 9 6.4 13 7 C9 7.6 7.6 9 7 13 C6.4 9 5 7.6 1 7 C5 6.4 6.4 5 7 1 Z" fill="#a6a6a6"/></svg>
<svg class="abs" style="left:45px;top:554.5px" width="14" height="14" viewBox="0 0 14 14"><path d="M7 1 C7.6 5 9 6.4 13 7 C9 7.6 7.6 9 7 13 C6.4 9 5 7.6 1 7 C5 6.4 6.4 5 7 1 Z" fill="#a6a6a6"/></svg>
<div class="abs" style="left:45px;top:634px;width:9px;height:21px;background:#e0e0e0;"></div>
<div class="abs" style="left:27px;top:623px;width:880px;height:1.3px;background:#7ea3e6;"></div>
<div class="abs" style="left:27px;top:665px;width:880px;height:1.3px;background:#7ea3e6;"></div>
<div class="t" style="left:90px;top:28.3px;color:#ffffff;font-weight:bold;">Shell</div>
<div class="t" style="left:135px;top:28.3px;color:#9d9d9d;"> python -u -c &quot;import time; from renga_api import open_renga, get_object_ids_by_…</div>
<div class="t" style="left:90px;top:70.3px;color:#d4d4d4;">Old walls deleted</div>
<div class="t" style="left:63px;top:133.3px;color:#aaaaaa;">Теперь нужно создать стены по одной с задержкой, чтобы видно было процесс.</div>
<div class="t" style="left:90px;top:196.3px;color:#ffffff;font-weight:bold;">Shell</div>
<div class="t" style="left:135px;top:196.3px;color:#9d9d9d;"> python -u -c &quot;import time; from renga_api import open_renga, create_word_from_w…</div>
<div class="t" style="left:90px;top:238.3px;color:#d4d4d4;">  File &quot;&lt;string&gt;&quot;, line 1</div>
<div class="t" style="left:90px;top:259.3px;color:#d4d4d4;">    import time; from renga_api import open_renga, create_word_from_walls, preview_wor</div>
<div class="t" style="left:90px;top:280.3px;color:#d4d4d4;">d_from_walls, create_wall; open_renga(mode=&#x27;active&#x27;); import renga_api.skills.model as</div>
<div class="t" style="left:90px;top:301.3px;color:#d4d4d4;"> m; orig=m._set_parameter_double; m._set_parameter_double=lambda o,p,v:None; segments=</div>
<div class="t" style="left:90px;top:322.3px;color:#d4d4d4;">preview_word_from_walls(&#x27;ПРИВЕТ ХАБР&#x27;, start_y=10000.0)[&#x27;segments&#x27;]; created=0; for s</div>
<div class="t" style="left:90px;top:343.3px;color:#d4d4d4;">in segments: create_wall(level_id=100998, start_x=s[&#x27;start&#x27;][&#x27;X&#x27;], start_y=s[&#x27;start&#x27;][</div>
<div class="t" style="left:90px;top:364.3px;color:#d4d4d4;">&#x27;Y&#x27;], end_x=s[&#x27;end&#x27;][&#x27;X&#x27;], end_y=s[&#x27;end&#x27;][&#x27;Y&#x27;]); created+=1; print(f&#x27;Wall {created}/36</div>
<div class="t" style="left:90px;top:385.3px;color:#d4d4d4;">&#x27;); time.sleep(0.3); m._set_parameter_double=orig; print(&#x27;Done!&#x27;)</div>
<div class="t" style="left:810px;top:469.3px;color:#d4d4d4;">^^^</div>
<div class="t" style="left:90px;top:490.3px;color:#d4d4d4;">SyntaxError: invalid syntax</div>
<div class="t" style="left:63px;top:553.3px;color:#aaaaaa;">Цикл for не работает в -c, нужно использовать list comprehension или exec.</div>
<div class="t" style="left:45px;top:595.3px;color:#cccccc;">⠏</div>
<div class="t" style="left:63px;top:595.3px;color:#c5a8f7;">Navigating the slime mold...</div>
<div class="t" style="left:324px;top:595.3px;color:#9a9a9a;">(36s · ↓ 444 tokens · esc to cancel)</div>
<div class="t" style="left:27px;top:637.3px;color:#a57cf5;">&gt;</div>
<div class="t" style="left:63px;top:637.3px;color:#8c8c8c;">Type your message or @path/to/file</div>
<div class="t" style="left:45px;top:679.3px;color:#9a9a9a;">? for shortcuts</div>
<div class="t" style="left:801px;top:679.3px;color:#9a9a9a;">5.8% used</div>
<!--/TEXT-->
</div>
</body></html>
